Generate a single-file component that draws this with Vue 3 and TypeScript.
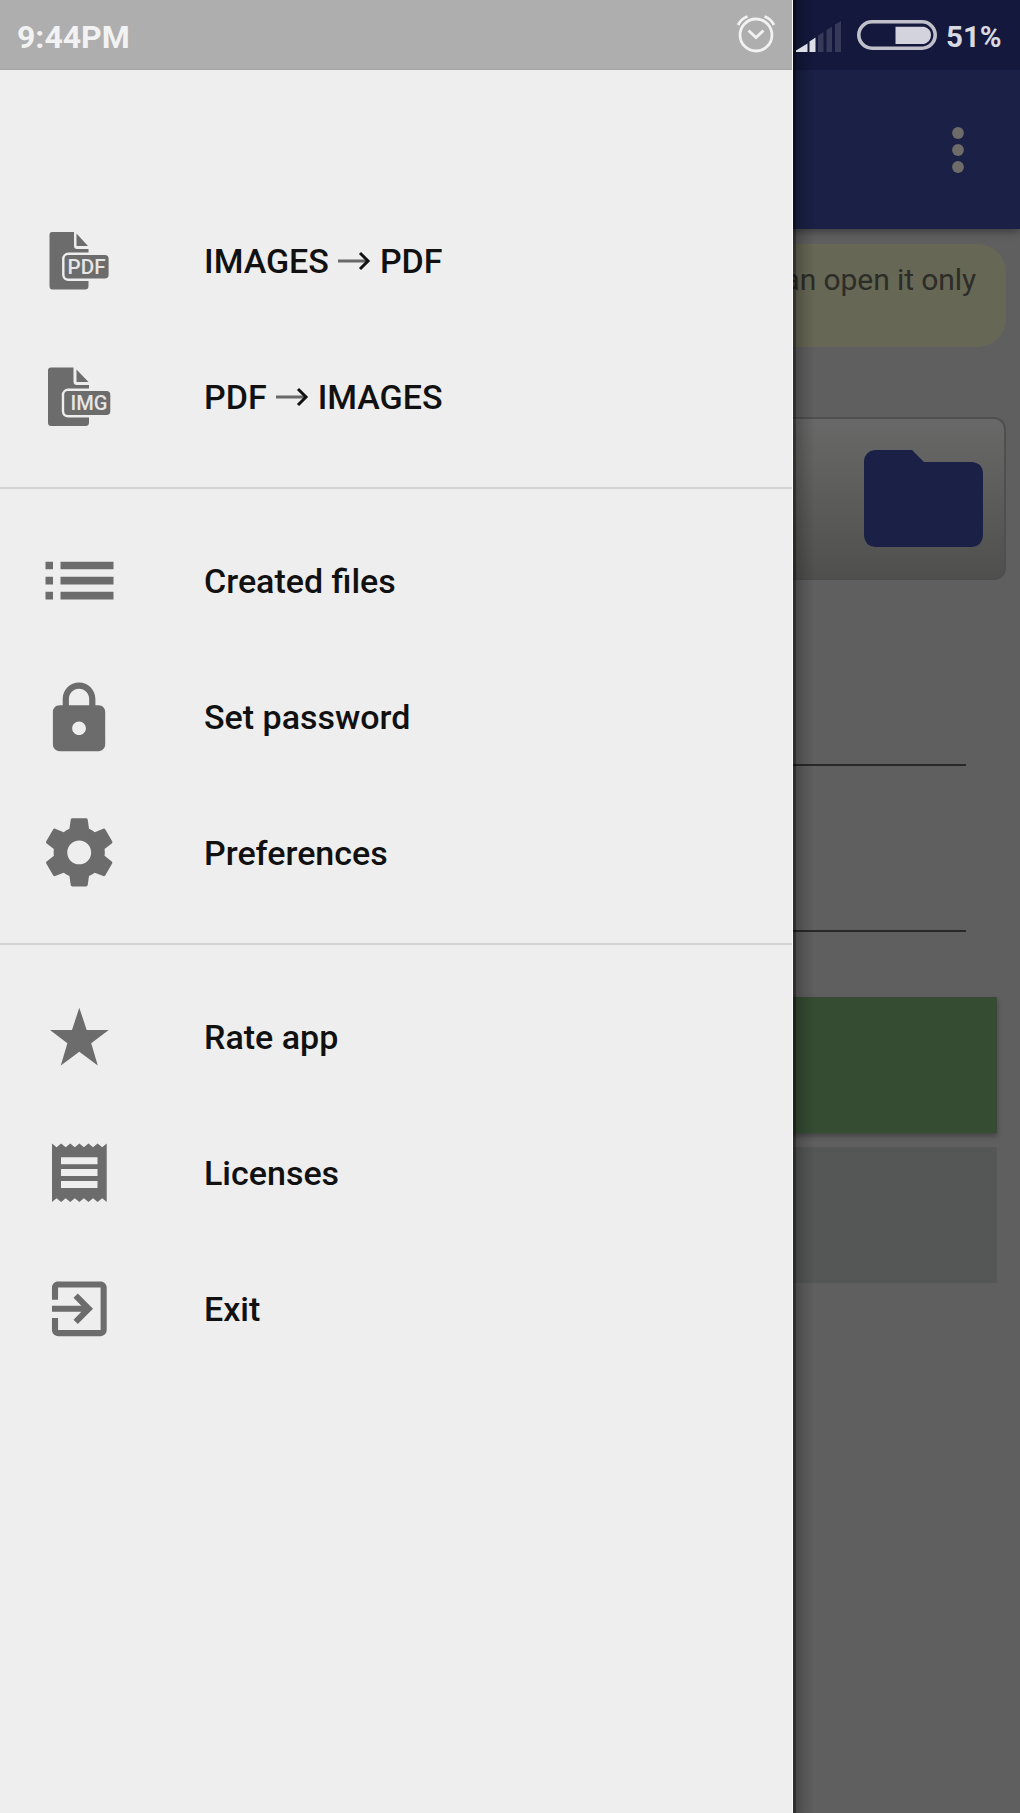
<script setup lang="ts">
interface MenuItem {
  icon: string
  label: string
  after?: string
}

const groups: MenuItem[][] = [
  [
    { icon: 'pdf', label: 'IMAGES', after: 'PDF' },
    { icon: 'img', label: 'PDF', after: 'IMAGES' },
  ],
  [
    { icon: 'list', label: 'Created files' },
    { icon: 'lock', label: 'Set password' },
    { icon: 'gear', label: 'Preferences' },
  ],
  [
    { icon: 'star', label: 'Rate app' },
    { icon: 'receipt', label: 'Licenses' },
    { icon: 'exit', label: 'Exit' },
  ],
]
</script>

<template>
  <div class="screen">
    <main class="page">
      <header class="appbar">
        <svg class="dots" width="12" height="48" viewBox="0 0 12 48">
          <circle cx="6" cy="7" r="5.9" /><circle cx="6" cy="24" r="5.9" /><circle cx="6" cy="41" r="5.9" />
        </svg>
      </header>
      <div class="notice">can open it only</div>
      <div class="picker">
        <svg width="119" height="97" viewBox="0 0 119 97">
          <path d="M11 0H48L60 12H108Q119 13 119 24V86Q118 96 108 97H11Q1 96 0 86V11Q1 1 11 0Z" />
        </svg>
      </div>
      <div class="field first"></div>
      <div class="field"></div>
      <div class="btn green"></div>
      <div class="btn grey"></div>
    </main>

    <aside class="drawer">
      <nav class="menu">
        <ul v-for="(group, g) in groups" :key="g" class="group">
          <li v-for="item in group" :key="item.icon" class="item">
            <svg class="icon" width="82" height="82" viewBox="0 0 82 82">
              <template v-if="item.icon === 'pdf'">
                <path d="M14 12H36V26Q36 29 39 29H50.5V66Q50.5 69.500 47 69.500H14.500Q11.500 69.500 11.500 66V15Q11.500 12 14 12Z" />
                <path d="M38.500 13.500L50 26H38.500Z" />
                <rect class="badge" x="25.300" y="33.800" width="46.500" height="26" rx="5" />
                <text class="tag" x="29.500" y="54" textLength="38" lengthAdjust="spacingAndGlyphs">PDF</text>
              </template>
              <template v-else-if="item.icon === 'img'">
                <path d="M13 11.500H35.500V25.500Q35.500 29 39 29H51V66.500Q51 70 47.500 70H13Q10 70 10 66.500V14.500Q10 11.500 13 11.500Z" />
                <path d="M38.500 13.500L50.500 26H38.500Z" />
                <rect class="badge" x="25" y="33.800" width="48.500" height="26.500" rx="5" />
                <text class="tag" x="32.500" y="54" textLength="37" lengthAdjust="spacingAndGlyphs">IMG</text>
              </template>
              <path
                v-else-if="item.icon === 'list'"
                d="M7.500 21.700h7.500v7.500h-7.500zM22.500 21.700h53v7.500h-53zM7.500 36.700h7.500v7.700h-7.500zM22.500 36.700h53v7.700h-53zM7.500 51.700h7.500v7.700h-7.500zM22.500 51.700h53v7.700h-53z"
              />
              <g v-else-if="item.icon === 'lock'" transform="translate(1.800 3.200) scale(3.270)">
                <path d="M18 8h-1V6c0-2.760-2.240-5-5-5S7 3.240 7 6v2H6c-1.100 0-2 .9-2 2v10c0 1.100.9 2 2 2h12c1.100 0 2-.9 2-2V10c0-1.100-.9-2-2-2zm-6 9.100c-1.160 0-2.100-.94-2.100-2.100s.94-2.100 2.100-2.100 2.100.94 2.100 2.100-.94 2.100-2.100 2.100zm3.100-9.100H8.900V6c0-1.710 1.390-3.100 3.100-3.100 1.710 0 3.100 1.390 3.100 3.100v2z" />
              </g>
              <g v-else-if="item.icon === 'gear'" transform="translate(.3 -.5) scale(3.410)">
                <path d="M19.430 12.980c.04-.32.070-.64.070-.98s-.03-.66-.07-.98l2.110-1.650c.19-.15.240-.42.120-.64l-2-3.460c-.12-.22-.39-.3-.61-.22l-2.490 1c-.52-.4-1.080-.73-1.690-.98l-.38-2.650C14.460 2.180 14.250 2 14 2h-4c-.25 0-.46.180-.49.420l-.38 2.650c-.61.250-1.170.59-1.690.98l-2.490-1c-.23-.09-.49 0-.61.220l-2 3.460c-.13.220-.07.490.12.640l2.110 1.650c-.04.320-.07.650-.07.980s.03.660.070.980l-2.110 1.650c-.19.150-.24.420-.12.640l2 3.460c.12.220.39.300.61.220l2.490-1c.52.400 1.080.730 1.690.980l.38 2.650c.03.240.24.420.49.420h4c.25 0 .46-.18.490-.42l.38-2.650c.61-.25 1.170-.59 1.690-.98l2.490 1c.23.090.49 0 .61-.22l2-3.460c.12-.22.070-.49-.12-.64l-2.110-1.650zM12 15.500c-1.930 0-3.500-1.570-3.500-3.500s1.570-3.500 3.500-3.500 3.500 1.570 3.500 3.500-1.570 3.500-3.500 3.500z" />
              </g>
              <path
                v-else-if="item.icon === 'star'"
                d="M41.300 11.800L48.700 34H70.700L53.200 47.300L59.800 69.500L41.300 55.700L22.800 69.500L29.400 47.300L12 34H34Z"
              />
              <path
                v-else-if="item.icon === 'receipt'"
                fill-rule="evenodd"
                d="M14 11.500l4.560 3.800 4.560-3.800 4.560 3.800 4.560-3.800 4.560 3.800 4.560-3.800 4.560 3.800 4.560-3.800 4.560 3.800 4.560-3.800 4.560 3.800 4.560-3.800V70l-4.560-3.800-4.560 3.800-4.560-3.800-4.560 3.800-4.560-3.800-4.560 3.800-4.560-3.800-4.560 3.800-4.560-3.800-4.560 3.800-4.560-3.800L14 70zM23 25.200v7h36.500v-7zM23 37v7h36.500v-7zM23 49v7h36.500v-7z"
              />
              <g v-else transform="translate(4.850 4.300) scale(3.040)">
                <path d="M10.090 15.590L11.500 17l5-5-5-5-1.410 1.410L12.670 11H3v2h9.670l-2.580 2.590zM19 3H5c-1.110 0-2 .9-2 2v4h2V5h14v14H5v-4H3v4c0 1.100.89 2 2 2h14c1.100 0 2-.9 2-2V5c0-1.100-.9-2-2-2z" />
              </g>
            </svg>
            <span class="label">
              {{ item.label }}<template v-if="item.after"><svg class="arrow" width="34" height="20" viewBox="0 0 34 20" role="img" aria-label="to"><path class="shaft" d="M1 10H31" /><path class="head" d="M23 2L31 10L23 18" /></svg>{{ item.after }}</template>
            </span>
          </li>
        </ul>
      </nav>
    </aside>

    <div class="status">
      <span class="time">9:44PM</span>
      <svg class="alarm" width="42" height="42" viewBox="0 0 42 42">
        <circle cx="21" cy="22" r="16" />
        <path d="M13.500 17.500L21 24.500L28.500 17.500" />
        <path d="M3 12Q6 6 12.500 3.500M39 12Q36 6 29.500 3.500" />
      </svg>
      <svg class="signal" width="46" height="32" viewBox="0 0 46 32">
        <path class="on" d="M0 31V29.500L11.500 22.500V31ZM13.500 31V20.500L19.500 16.500V31Z" />
        <path class="off" d="M22 31V14.500L27.500 11V31ZM30.500 31V9L36 5.500V31ZM39 31V3.500L45 0V31Z" />
      </svg>
      <svg class="battery" width="80" height="30" viewBox="0 0 80 30">
        <rect x="1.800" y="1.800" width="76.400" height="26.400" rx="13.200" />
        <path d="M38.500 6.700H67Q74 8.500 74 15Q74 21.500 67 24H38.500Z" />
      </svg>
      <span class="percent">51%</span>
    </div>
  </div>
</template>

<style>
body {
  margin: 0;
}
</style>

<style scoped>
.screen {
  position: relative;
  width: 1020px;
  height: 1813px;
  overflow: hidden;
  background: #5f5f5f;
  font-family: Roboto, 'Liberation Sans', sans-serif;
}
.page {
  display: flex;
  flex-direction: column;
}
.appbar {
  box-sizing: border-box;
  height: 229px;
  padding: 126px 56px 0 0;
  display: flex;
  justify-content: flex-end;
  background: linear-gradient(#13183c 70px, #1a2046 70px);
  box-shadow: 0 3px 8px rgba(0, 0, 0, 0.35);
}
.dots {
  fill: #6d6c69;
}
.notice {
  box-sizing: border-box;
  height: 103px;
  margin: 15px 14px 0 16px;
  padding: 18px 30px 0 0;
  border-radius: 28px;
  background: #666754;
  color: #2c2c28;
  font-size: 30px;
  line-height: 36px;
  letter-spacing: -0.1px;
  text-align: right;
}
.picker {
  box-sizing: border-box;
  height: 163px;
  margin: 70px 14px 0 16px;
  padding: 31px 21px 0 0;
  display: flex;
  justify-content: flex-end;
  border: 2px solid #4f4f4f;
  border-bottom-color: #4d4d4d;
  border-radius: 12px;
  background: linear-gradient(#686868, #5b5b59 55%, #4f4f4e);
}
.picker svg {
  fill: #1a2046;
}
.field {
  height: 164px;
  margin: 0 54px 0 16px;
  border-bottom: 2px solid #282828;
}
.field.first {
  height: 184px;
}
.btn {
  height: 136px;
  margin: 65px 23px 0 16px;
}
.green {
  background: #354c32;
  box-shadow: 0 3px 5px rgba(0, 0, 0, 0.3);
}
.grey {
  margin-top: 14px;
  background: #555756;
}

/* Navigation drawer, laid over the dimmed page */
.drawer {
  position: absolute;
  top: 0;
  left: 0;
  box-sizing: border-box;
  width: 793px;
  height: 1813px;
  padding-top: 193px;
  border-right: 1px solid #fafafa;
  background: linear-gradient(#aeaeae 69px, #a6a6a6 69px, #a6a6a6 70px, #eee 70px);
}
.drawer::after {
  content: '';
  position: absolute;
  top: 0;
  left: 793px;
  width: 22px;
  height: 100%;
  background: linear-gradient(90deg, rgba(0, 0, 0, 0.5) 0 2.500px, rgba(0, 0, 0, 0.23) 3px, rgba(0, 0, 0, 0.1) 12px, transparent);
}
.group {
  margin: 0;
  padding: 0;
  list-style: none;
}
.group + .group {
  margin-top: 22px;
  padding-top: 24px;
  border-top: 2px solid #d2d2d2;
}
.item {
  height: 136px;
  padding-left: 38px;
  display: flex;
  align-items: center;
}
.icon {
  flex: none;
  margin-right: 84px;
  fill: #6c6c6c;
}
.badge {
  stroke: #eee;
  stroke-width: 2.400px;
}
.tag {
  fill: #e6e6e6;
  font-size: 20px;
  font-weight: 500;
}
.label {
  color: #111;
  font-size: 34px;
  font-weight: 500;
  line-height: 40px;
  white-space: nowrap;
}
.arrow {
  margin: 0 9px 0 8px;
  fill: none;
  vertical-align: 2px;
}
.shaft {
  stroke: #686868;
  stroke-width: 3px;
}
.head {
  stroke: #111;
  stroke-width: 3px;
}

/* System status bar */
.status {
  position: absolute;
  top: 0;
  left: 0;
  box-sizing: border-box;
  width: 1020px;
  height: 70px;
  padding-left: 17px;
  display: flex;
  align-items: center;
  color: #f2f2f2;
  font-size: 32px;
  font-weight: 700;
}
.time {
  width: 718px;
  padding-top: 3px;
}
.alarm {
  margin-top: -2px;
  fill: none;
  stroke: #f2f2f2;
  stroke-width: 2.800px;
}
.signal {
  margin: 3px 0 0 19px;
}
.on {
  fill: #dedfe6;
}
.off {
  fill: #363a58;
}
.battery {
  margin-left: 15px;
}
.battery rect {
  fill: none;
  stroke: #bfc0ca;
  stroke-width: 3.600px;
}
.battery path {
  fill: #d2d3dc;
}
.percent {
  padding: 3px 0 0 9px;
  color: #d8d9e1;
  font-size: 29.500px;
}
</style>
